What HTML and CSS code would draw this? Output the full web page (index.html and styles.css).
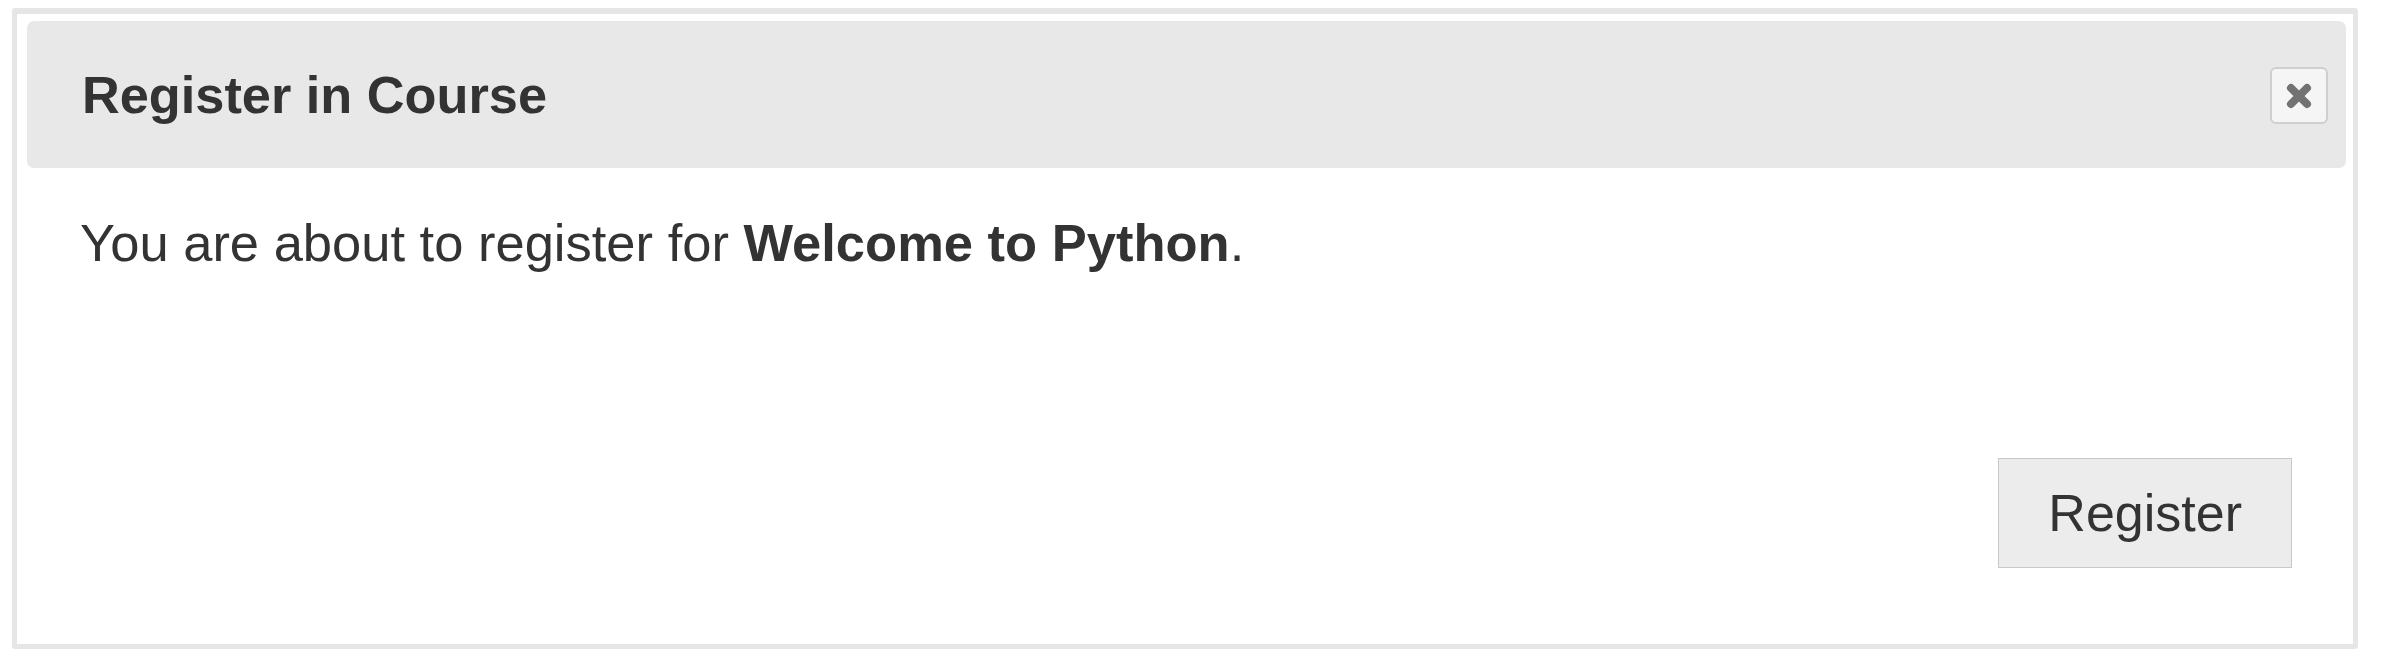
FILE: index.html
```html
<!DOCTYPE html>
<html>
<head>
<meta charset="utf-8">
<title>Register in Course</title>
<link rel="stylesheet" href="styles.css">
</head>
<body>
<div class="modal">
  <div class="modal-header">
    <h4 class="modal-title">Register in Course</h4>
    <button class="close" type="button" aria-label="Close">
      <svg width="30" height="28" viewBox="0 0 30 28"><path d="M7 6 L23 22 M23 6 L7 22" stroke="#727272" stroke-width="8" stroke-linecap="round" fill="none"/></svg>
    </button>
  </div>
  <div class="modal-body">
    <p class="message">You are about to register for <strong>Welcome to Python</strong>.</p>
  </div>
  <div class="modal-footer">
    <button class="btn" type="button">Register</button>
  </div>
</div>
</body>
</html>
```
FILE: styles.css
```css
html, body {
  margin: 0;
  padding: 0;
  background: #ffffff;
}
body {
  padding: 8px 31px 9px 12px;
  font-family: "Liberation Sans", Arial, sans-serif;
  color: #333333;
}
.modal {
  border: 5px solid #e6e6e6;
  border-top-width: 6px;
  border-radius: 3px;
  background: #ffffff;
  padding: 7px 7px 0 10px;
  display: flex;
  flex-direction: column;
}
.modal-header {
  height: 147px;
  background: #e8e8e8;
  border-radius: 7px;
  display: flex;
  align-items: center;
  justify-content: space-between;
  padding: 0 18px 0 55px;
}
.modal-title {
  margin: 0;
  font-size: 52.3px;
  font-weight: bold;
  line-height: 62px;
  color: #333333;
}
.close {
  width: 58px;
  height: 57px;
  box-sizing: border-box;
  border: 2px solid #cfcfcf;
  border-radius: 6px;
  background: #f5f5f5;
  display: flex;
  align-items: center;
  justify-content: center;
  padding: 0;
  margin-top: 2px;
}
.modal-body {
  padding: 44px 0 0 53px;
}
.message {
  margin: 0;
  font-size: 52.5px;
  line-height: 62px;
  color: #333333;
}
.message strong {
  font-weight: bold;
}
.modal-footer {
  display: flex;
  justify-content: flex-end;
  padding: 184px 54px 76px 0;
}
.btn {
  font-family: "Liberation Sans", Arial, sans-serif;
  font-size: 52px;
  line-height: 62px;
  color: #333333;
  background: #ececec;
  border: 1px solid #c8c8c8;
  border-radius: 0;
  padding: 23px 49px;
  margin: 0;
}
```
